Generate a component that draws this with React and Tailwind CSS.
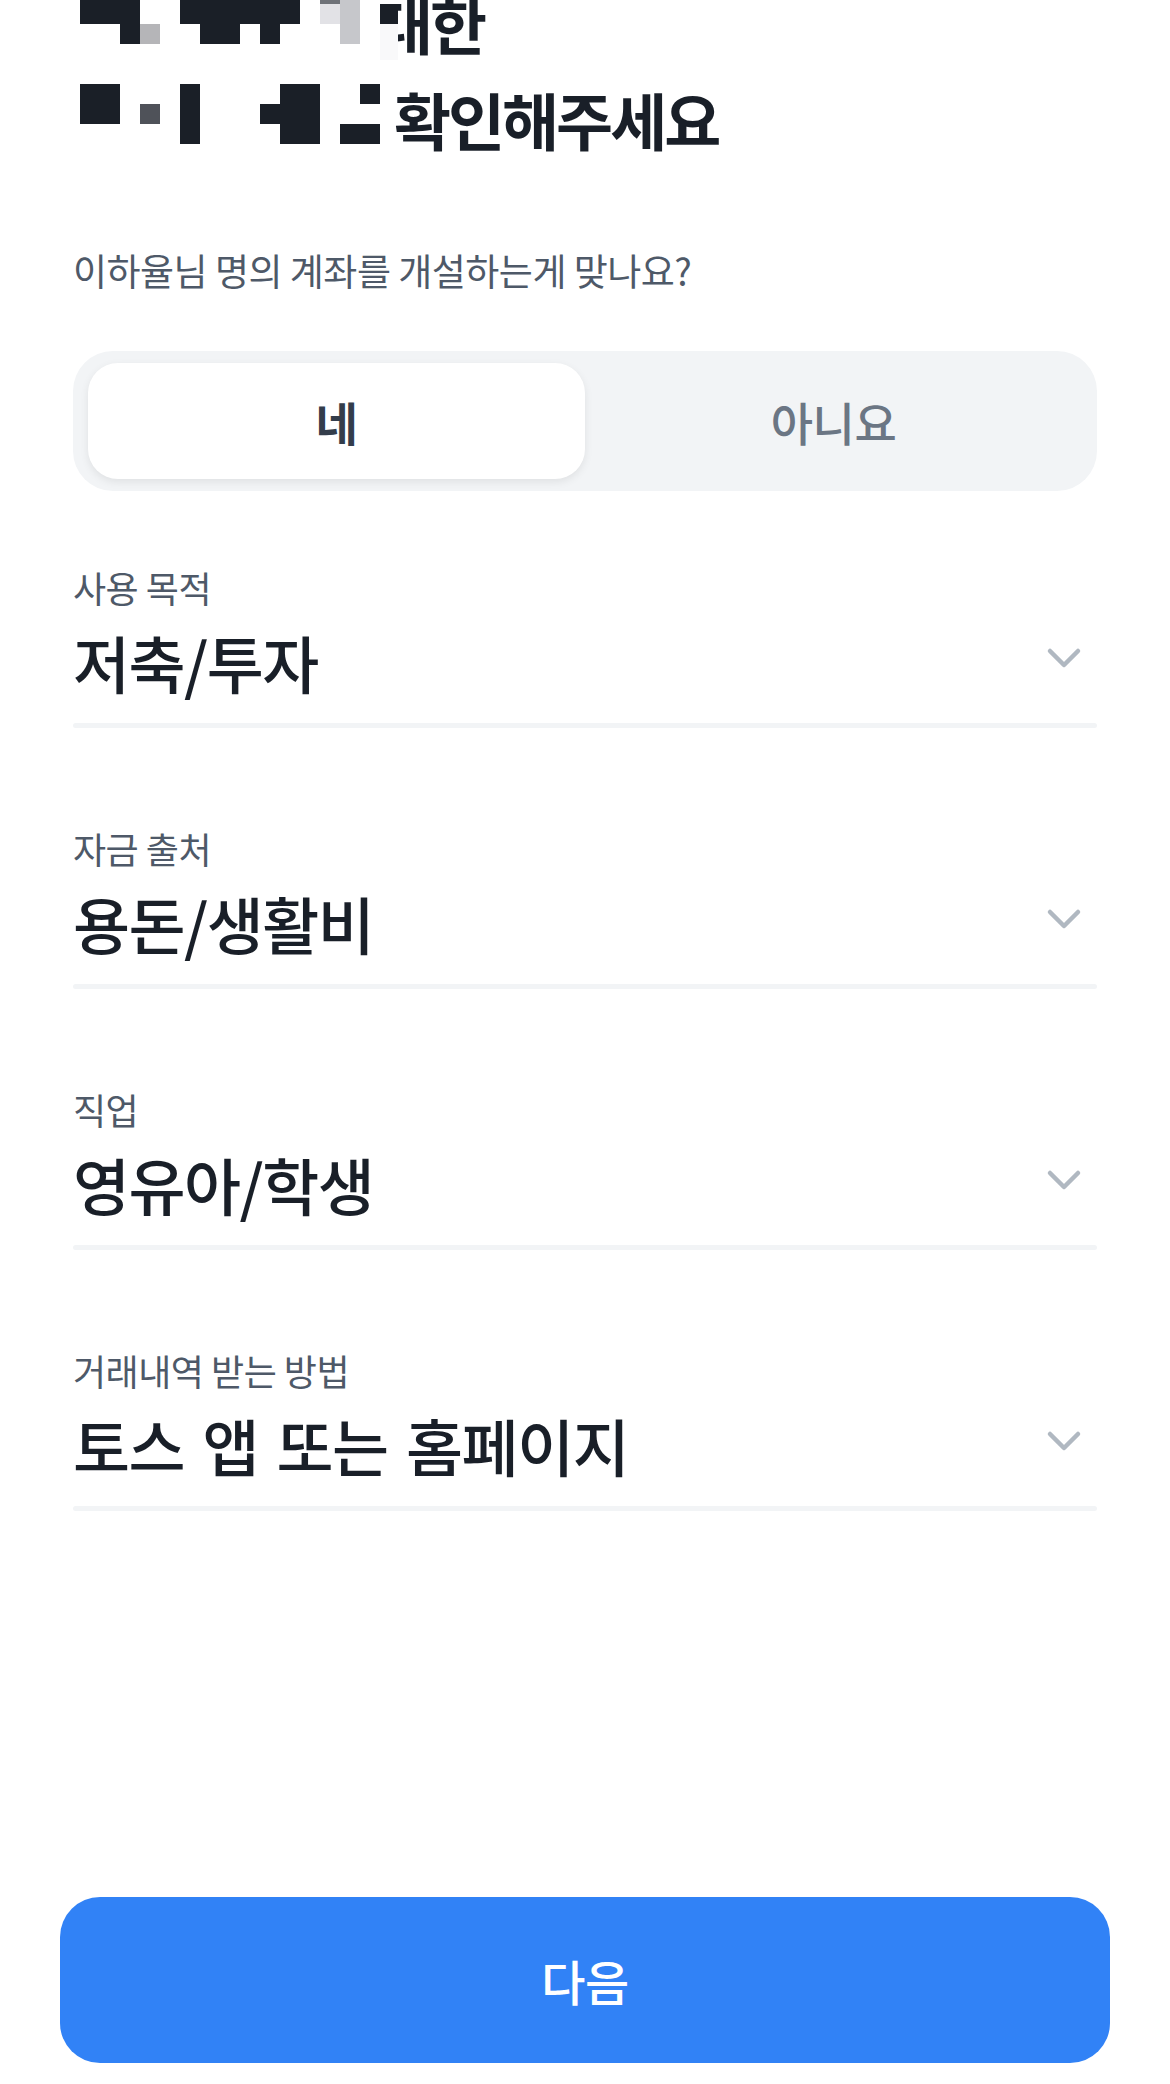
import { useState } from 'react';

const DARK = '#1a1f27';

// mosaic cells that hide part of the title (page coordinates)
const mosaic = [
  [80, 0, 60, 24, DARK],
  [180, 0, 120, 24, DARK],
  [320, 0, 20, 4, '#6f7278'],
  [320, 4, 20, 20, '#e2e2e6'],
  [340, 0, 20, 44, '#c6c7cb'],
  [360, 0, 20, 60, '#ffffff'],
  [380, 0, 18, 4, '#ffffff'],
  [380, 4, 18, 20, DARK],
  [380, 24, 18, 36, '#f9f9fa'],
  [120, 24, 20, 20, DARK],
  [140, 24, 20, 20, '#b5b5b8'],
  [200, 24, 40, 20, DARK],
  [260, 24, 20, 20, DARK],
  [80, 84, 40, 40, DARK],
  [140, 104, 20, 20, '#4f5259'],
  [180, 84, 20, 60, DARK],
  [260, 104, 20, 20, DARK],
  [280, 84, 40, 60, DARK],
  [360, 84, 20, 20, DARK],
  [340, 124, 40, 20, DARK],
];

const fields = [
  { label: '사용 목적', value: '저축/투자' },
  { label: '자금 출처', value: '용돈/생활비' },
  { label: '직업', value: '영유아/학생' },
  { label: '거래내역 받는 방법', value: '토스 앱 또는 홈페이지' },
];

const Chevron = () => (
  <svg width="36" height="24" viewBox="0 0 36 24" fill="none">
    <polyline points="4,5 18,19 32,5" stroke="#b0b8c1" strokeWidth="4.5" strokeLinecap="round" strokeLinejoin="round" />
  </svg>
);

const SelectField = ({ label, value }) => (
  <div className="flex flex-col">
    <div className="text-[36px] leading-[40px] tracking-[-0.5px] text-[#4e5968]">{label}</div>
    <div className="mt-[19px] flex items-center justify-between">
      <div className="text-[62px] leading-[72px] font-medium tracking-[-1.5px] [word-spacing:6px] text-[#191f28]">{value}</div>
      <div className="mr-[15px] -mt-[8px]">
        <Chevron />
      </div>
    </div>
    <div className="mt-[25px] h-[5px] rounded-full bg-[#f2f4f6]" />
  </div>
);

const App = () => {
  const [agree, setAgree] = useState(true);

  return (
    <div className="h-[2084px] overflow-hidden bg-white flex flex-col font-['Noto_Sans_CJK_KR',sans-serif]">
      <div className="px-[73px] flex flex-col">
        {/* title, partly scrolled off the top */}
        <div className="relative -mt-[25px] text-[62px] leading-[96px] font-bold tracking-[-3px] text-[#191f28]">
          <div className="ml-[303px]">대한</div>
          <div className="ml-[321px]">확인해주세요</div>
          <svg className="absolute left-0 top-[25px]" width="330" height="150" viewBox="73 0 330 150">
            {mosaic.map(([x, y, w, h, c], i) => (
              <rect key={i} x={x} y={y} width={w} height={h} fill={c} />
            ))}
          </svg>
        </div>

        <p className="mt-[83px] text-[37px] leading-[40px] tracking-[-0.5px] text-[#4e5968]">
          이하율님 명의 계좌를 개설하는게 맞나요?
        </p>

        <div className="mt-[61px] h-[140px] rounded-[40px] bg-[#f2f4f6] px-[15px] py-[12px] flex">
          <button
            onClick={() => setAgree(true)}
            className={`flex-1 rounded-[30px] text-[46px] tracking-[-0.5px] ${agree ? 'bg-white font-semibold text-[#333d4b] shadow-[0_3px_8px_rgba(0,0,0,0.08)]' : 'font-medium text-[#6b7684]'}`}
          >
            네
          </button>
          <button
            onClick={() => setAgree(false)}
            className={`flex-1 rounded-[30px] text-[46px] tracking-[-0.5px] ${!agree ? 'bg-white font-semibold text-[#333d4b] shadow-[0_3px_8px_rgba(0,0,0,0.08)]' : 'font-medium text-[#6b7684]'}`}
          >
            아니요
          </button>
        </div>

        <div className="mt-[76px] flex flex-col gap-[100px]">
          {fields.map((f) => (
            <SelectField key={f.label} label={f.label} value={f.value} />
          ))}
        </div>
      </div>

      <div className="mt-auto px-[60px] pb-[21px]">
        <button className="w-full h-[166px] rounded-[40px] bg-[#3182f6] text-white text-[48px] font-medium tracking-[-0.5px]">
          다음
        </button>
      </div>
    </div>
  );
};

export default App;
